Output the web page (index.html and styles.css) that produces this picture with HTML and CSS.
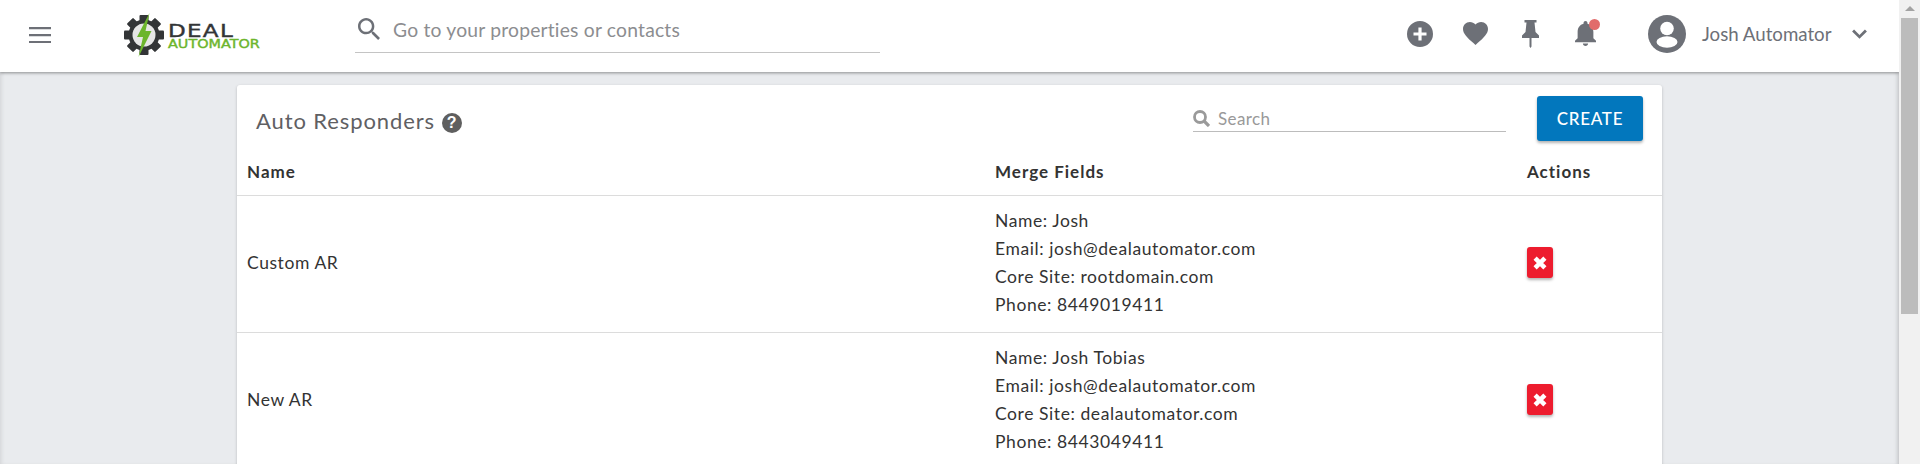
FILE: index.html
```html
<!DOCTYPE html>
<html lang="en">
<head>
<meta charset="utf-8">
<title>Auto Responders</title>
<link rel="stylesheet" href="styles.css">
</head>
<body>
<div class="window">
  <div class="page">
    <header class="topbar">
      <svg class="menu-icon" viewBox="0 0 22 16"><path d="M0 0h22v2.2H0zM0 7h22v2.2H0zM0 14h22v2.2H0z"/></svg>
      <div class="logo">
        <svg class="logo-mark" viewBox="0 0 40 44">
          <g fill="#333537">
            <rect x="15.500" y="2" width="9" height="40" rx="1"/>
            <rect x="15.500" y="2" width="9" height="40" rx="1" transform="rotate(45 20 22)"/>
            <rect x="15.500" y="2" width="9" height="40" rx="1" transform="rotate(90 20 22)"/>
            <rect x="15.500" y="2" width="9" height="40" rx="1" transform="rotate(135 20 22)"/>
            <circle cx="20" cy="22" r="15.500"/>
          </g>
          <circle cx="20" cy="22" r="11.500" fill="#e6e6e6"/>
          <path d="M25.500 0 L13 24 H19 L14.500 44 L27.500 18 H21.500 Z" fill="#6cb52d"/>
        </svg>
        <div class="logo-text">
          <span class="logo-deal">DEAL</span>
          <span class="logo-auto">AUTOMATOR</span>
        </div>
      </div>
      <div class="global-search">
        <svg class="global-search-icon" viewBox="3 3 17.5 17.5"><path d="M15.5 14h-.79l-.28-.27C15.41 12.59 16 11.11 16 9.5 16 5.91 13.09 3 9.5 3S3 5.91 3 9.5 5.91 16 9.5 16c1.61 0 3.09-.59 4.23-1.57l.27.28v.79l5 4.99L20.49 19l-4.99-5zm-6 0C7.01 14 5 11.99 5 9.5S7.01 5 9.5 5 14 7.01 14 9.5 11.99 14 9.5 14z"/></svg>
        <span class="global-search-text">Go to your properties or contacts</span>
      </div>
      <div class="top-actions">
        <svg class="ti ti-plus" viewBox="0 0 26 26"><path fill-rule="evenodd" d="M13 0a13 13 0 1 0 0 26a13 13 0 0 0 0-26zM11.4 6.500h3.200v4.900h4.900v3.200h-4.900v4.900h-3.200v-4.900H6.500v-3.200h4.900z"/></svg>
        <svg class="ti ti-heart" viewBox="2 3 20 18.350" preserveAspectRatio="none"><path d="M12 21.350l-1.450-1.320C5.400 15.360 2 12.280 2 8.500 2 5.420 4.420 3 7.500 3c1.740 0 3.410.81 4.500 2.090C13.090 3.810 14.760 3 16.500 3 19.580 3 22 5.420 22 8.500c0 3.780-3.400 6.860-8.550 11.540L12 21.350z"/></svg>
        <svg class="ti ti-pin" viewBox="0 0 17 28"><path d="M2.500 0h12v2.500h-2L13.500 12 17 15.500V18H9.500v8.500L8.500 28l-1-1.500V18H0v-2.500L3.500 12l1-9.500h-2z"/></svg>
        <div class="bell-wrap">
          <svg class="ti-bell" viewBox="4 2.500 16 19.500" preserveAspectRatio="none"><path d="M12 22c1.100 0 2-.9 2-2h-4c0 1.100.9 2 2 2zm6-6v-5c0-3.070-1.630-5.640-4.500-6.320V4c0-.83-.67-1.500-1.500-1.500s-1.500.67-1.500 1.500v.68C7.640 5.360 6 7.920 6 11v5l-2 2v1h16v-1l-2-2z"/></svg>
          <span class="bell-dot"></span>
        </div>
        <svg class="avatar" viewBox="0 0 38 38"><circle cx="19" cy="19" r="19"/><circle cx="19" cy="13.500" r="6.800" fill="#fff"/><ellipse cx="19" cy="27" rx="10.500" ry="5.800" fill="#fff"/></svg>
        <span class="user-name">Josh Automator</span>
        <svg class="chevron" viewBox="0 0 14 9"><path d="M1 1.200l6 6 6-6" fill="none" stroke-width="2.600"/></svg>
      </div>
    </header>
    <main class="content">
      <section class="card">
        <div class="card-head">
          <h1 class="card-title">Auto Responders <span class="help">?</span></h1>
          <div class="table-search">
            <svg class="table-search-icon" viewBox="0 0 17 17"><circle cx="7" cy="7" r="5.500" fill="none" stroke-width="2.800"/><path d="M11 11l5 5" fill="none" stroke-width="3.200"/></svg>
            <span class="table-search-text">Search</span>
          </div>
          <button class="create-btn">CREATE</button>
        </div>
        <table class="ar-table">
          <colgroup><col class="col-name"><col class="col-merge"><col class="col-actions"></colgroup>
          <thead>
            <tr><th>Name</th><th>Merge Fields</th><th>Actions</th></tr>
          </thead>
          <tbody>
            <tr>
              <td>Custom AR</td>
              <td><div class="ml">Name: Josh</div><div class="ml">Email: josh@dealautomator.com</div><div class="ml">Core Site: rootdomain.com</div><div class="ml">Phone: 8449019411</div></td>
              <td><button class="del-btn"><svg class="del-icon" viewBox="0 0 10 10"><path d="M1.500 1.500l7 7M8.500 1.500l-7 7"/></svg></button></td>
            </tr>
            <tr>
              <td>New AR</td>
              <td><div class="ml">Name: Josh Tobias</div><div class="ml">Email: josh@dealautomator.com</div><div class="ml">Core Site: dealautomator.com</div><div class="ml">Phone: 8443049411</div></td>
              <td><button class="del-btn"><svg class="del-icon" viewBox="0 0 10 10"><path d="M1.500 1.500l7 7M8.500 1.500l-7 7"/></svg></button></td>
            </tr>
          </tbody>
        </table>
      </section>
    </main>
  </div>
  <aside class="scrollbar">
    <span class="scroll-up"></span>
    <span class="scroll-thumb"></span>
  </aside>
</div>
</body>
</html>
```
FILE: styles.css
```css
* { box-sizing: border-box; }
html, body { margin: 0; height: 100%; overflow: hidden; }
body { font-family: Lato, "Open Sans", sans-serif; color: #333; background: #e9ebee; }
.window { display: flex; height: 464px; width: 1920px; }
.page { width: 1899px; height: 464px; overflow: hidden; display: flex; flex-direction: column; box-shadow: inset 4px 0 4px -3px #d0d1d4, inset -4px 0 4px -3px #b9babd; }

.topbar { flex: none; height: 72px; background: #fff; display: flex; align-items: center; padding-left: 29px; padding-bottom: 5px; box-shadow: 0 1px 3px rgba(0,0,0,.4); position: relative; }
.menu-icon { width: 22px; height: 16px; fill: #6d7077; flex: none; margin-top: 3px; }
.logo { display: flex; align-items: center; margin-left: 73px; width: 135px; flex: none; }
.logo-mark { width: 40px; height: 44px; flex: none; margin-top: 2px; }
.logo-text { display: flex; flex-direction: column; margin-left: 4px; margin-top: 5px; font-family: "DejaVu Sans", sans-serif; }
.logo-deal { font-size: 18px; line-height: 16px; color: #333537; letter-spacing: 1px; -webkit-text-stroke: .4px #333537; transform: scaleX(1.28); transform-origin: left; }
.logo-auto { font-size: 12px; line-height: 11px; color: #6cb52d; -webkit-text-stroke: .4px #6cb52d; transform: scaleX(1.2); transform-origin: left; }

.global-search { flex: none; width: 525px; height: 53px; margin-left: 96px; border-bottom: 1px solid #c4c4c4; display: flex; align-items: center; padding-left: 3px; align-self: flex-start; }
.global-search-icon { width: 22px; height: 22px; fill: #6d7077; flex: none; margin-top: 6px; }
.global-search-text { margin-left: 13px; margin-top: 6px; font-size: 19.3px; color: #8c8d90; letter-spacing: .2px; }

.top-actions { margin-left: auto; display: flex; align-items: center; padding-right: 32px; }
.ti { fill: #6d7077; flex: none; }
.ti-plus { width: 26px; height: 26px; }
.ti-heart { width: 25px; height: 23px; margin-left: 30px; }
.ti-pin { width: 17px; height: 28px; margin-left: 34px; }
.bell-wrap { position: relative; width: 21px; height: 25px; margin-left: 36px; flex: none; }
.ti-bell { width: 21px; height: 25px; fill: #6d7077; display: block; }
.bell-dot { position: absolute; top: -2px; right: -4px; width: 11px; height: 11px; border-radius: 50%; background: #e16b6b; }
.avatar { width: 38px; height: 38px; fill: #6d7077; margin-left: 52px; flex: none; }
.user-name { margin-left: 16px; font-size: 18.7px; color: #6d7077; width: 150px; flex: none; }
.chevron { width: 15px; height: 10px; stroke: #6d7077; flex: none; }

.content { flex: 1; padding: 13px 237px 0; }
.card { width: 1425px; background: #fff; border-radius: 3px; box-shadow: 0 1px 3px rgba(0,0,0,.22); }
.card-head { height: 68px; display: flex; align-items: flex-start; padding: 11px 19px 0 19px; }
.card-title { margin: 12px 0 0; font-size: 22px; line-height: 26px; font-weight: 400; color: #5f6063; letter-spacing: .9px; }
.help { display: inline-block; width: 20px; height: 20px; margin-left: 0; border-radius: 50%; background: #5f5f5f; color: #fff; font: 700 16px/20px "Liberation Sans", sans-serif; text-align: center; letter-spacing: 0; vertical-align: 1px; }
.table-search { margin-left: auto; width: 313px; height: 36px; border-bottom: 1px solid #bcbcbc; display: flex; align-items: center; margin-top: 0; padding-top: 9px; }
.table-search-icon { width: 17px; height: 17px; stroke: #9a9a9a; flex: none; }
.table-search-text { margin-left: 8px; font-size: 17px; color: #999; letter-spacing: .4px; }
.create-btn { width: 106px; height: 45px; margin-left: 31px; border: 0; border-radius: 3px; background: #0277bd; color: #fff; font: 500 17px Lato, sans-serif; letter-spacing: .7px; box-shadow: 0 2px 3px rgba(0,0,0,.3); padding: 0; }

.ar-table { width: 1425px; border-collapse: collapse; table-layout: fixed; }
.col-name { width: 748px; }
.col-merge { width: 532px; }
.col-actions { width: 145px; }
.ar-table th { height: 42px; padding: 0 10px 4px; text-align: left; font-size: 17px; font-weight: 700; color: #333; letter-spacing: 1px; border-bottom: 1px solid #dcdcdc; }
.ar-table td { padding: 11px 10px 13px; font-size: 17.5px; line-height: 28px; color: #333; letter-spacing: .58px; border-bottom: 1px solid #dcdcdc; vertical-align: middle; }
.ml { height: 28px; }
.del-btn { display: flex; align-items: center; justify-content: center; width: 26px; height: 31px; padding: 0; border: 0; border-radius: 3px; background: #ed1c2e; box-shadow: 0 2px 3px rgba(0,0,0,.3); }
.del-icon { width: 14px; height: 14px; stroke: #fff; stroke-width: 3.2; fill: none; }

.scrollbar { position: relative; width: 21px; height: 464px; background: #f1f1f1; flex: none; padding: 6px 2px 0; display: flex; flex-direction: column; align-items: center; }
.scroll-up { width: 0; height: 0; border-left: 5px solid transparent; border-right: 5px solid transparent; border-bottom: 5px solid #a3a3a3; }
.scroll-thumb { width: 17px; height: 296px; margin-top: 7px; background: #bcbcbc; }
```
